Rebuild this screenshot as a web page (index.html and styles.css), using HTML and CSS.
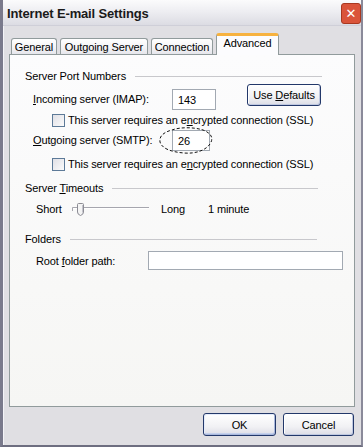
FILE: index.html
```html
<!DOCTYPE html>
<html>
<head>
<meta charset="utf-8">
<link rel="stylesheet" href="styles.css">
</head>
<body>
<div class="window">
  <div class="titlebar">
    <span class="title">Internet E-mail Settings</span>
    <span class="close"><span class="close-x">✕</span></span>
  </div>
  <div class="content">
    <div class="tabs">
      <div class="tab tab-general">General</div>
      <div class="tab tab-outgoing">Outgoing Server</div>
      <div class="tab tab-connection">Connection</div>
      <div class="tab tab-active">Advanced</div>
    </div>
    <div class="panel">
      <div class="group-head"><span>Server Port Numbers</span><span class="rule"></span></div>
      <div class="row row-incoming">
        <span class="label"><u>I</u>ncoming server (IMAP):</span>
        <span class="input input-port">143</span>
        <span class="btn btn-defaults"><span>Use <u>D</u>efaults</span></span>
      </div>
      <div class="check-row check-1"><span class="checkbox"></span><span>This server requires an e<u>n</u>crypted connection (SSL)</span></div>
      <div class="row row-outgoing">
        <span class="label"><u>O</u>utgoing server (SMTP):</span>
        <span class="input input-port input-short">26
          <svg class="circle" width="56" height="28" viewBox="0 0 56 28"><path d="M14 3 C22 0 36 0 45 3 C53 6 56 11 52 17 C48 23 38 27 26 26 C14 25 4 22 2 15 C1 9 6 5 14 3 Z" fill="none" stroke="#111" stroke-width="1" stroke-dasharray="3 2"/></svg>
        </span>
      </div>
      <div class="check-row check-2"><span class="checkbox"></span><span>This server requires an e<u>n</u>crypted connection (SSL)</span></div>

      <div class="group-head head-timeouts"><span>Server <u>T</u>imeouts</span><span class="rule"></span></div>
      <div class="slider-row">
        <span class="short">Short</span>
        <svg class="slider" width="78" height="14" viewBox="0 0 78 14">
          <line x1="0.5" y1="4.5" x2="77" y2="4.5" stroke="#a6a6ae"/>
          <line x1="1" y1="5.5" x2="77" y2="5.5" stroke="#ffffff"/>
          <line x1="0.5" y1="4.5" x2="0.5" y2="8" stroke="#a6a6ae"/>
          <path d="M5.5 1.5 Q5.5 0.5 6.5 0.5 L10.5 0.5 Q11.5 0.5 11.5 1.5 L11.5 9 Q11.5 11.5 8.5 12.5 Q5.5 11.5 5.5 9 Z" fill="#f4f4f4" stroke="#8c8c94"/>
          <line x1="10.5" y1="2" x2="10.5" y2="9.5" stroke="#c4c4cc"/>
        </svg>
        <span class="long">Long</span>
        <span>1 minute</span>
      </div>

      <div class="group-head head-folders"><span>Folders</span><span class="rule"></span></div>
      <div class="row row-root">
        <span class="label label-root">Root <u>f</u>older path:</span>
        <span class="input input-root"></span>
      </div>
    </div>
    <div class="buttons">
      <span class="btn btn-ok">OK</span>
      <span class="btn btn-cancel">Cancel</span>
    </div>
  </div>
</div>
</body>
</html>
```
FILE: styles.css
```css
html, body {
  margin: 0;
  padding: 0;
  background: #e0dfe3;
}
body {
  font-family: "Liberation Sans", Arial, sans-serif;
  font-size: 11px;
  letter-spacing: -0.12px;
  color: #000;
}
u { text-decoration: underline; text-underline-offset: 1px; }

.window {
  width: 363px;
  height: 447px;
  box-sizing: border-box;
  display: flex;
  flex-direction: column;
  background: #e0dfe3;
  border-left: 3px solid #7a7a8c;
  border-right: 2px solid #8a8a9a;
  border-bottom: 2px solid #6e6e80;
  box-shadow: inset 1px 0 0 #f4f4f8;
}

.titlebar {
  height: 26px;
  flex: none;
  display: flex;
  align-items: center;
  justify-content: space-between;
  padding: 0 0 0 4px;
  background: linear-gradient(#fbfbfc 0%, #eeeef2 45%, #dcdce3 100%);
  border-bottom: 1px solid #cfcfd8;
  box-sizing: border-box;
}
.title {
  font-weight: bold;
  font-size: 13px;
  letter-spacing: -0.15px;
  color: #1a1a1a;
  margin-top: 2px;
}
.close {
  flex: none;
  width: 20px;
  height: 21px;
  box-sizing: border-box;
  margin-top: 1px;
  border-radius: 3px;
  background-color: rgb(218, 84, 58);
  border: 1px solid rgb(168, 56, 32);
  display: flex;
  align-items: center;
  justify-content: center;
}
.close-x {
  color: #ffffff;
  font-family: "DejaVu Sans", sans-serif;
  font-size: 13px;
  font-weight: bold;
  line-height: 1;
}

.content {
  flex: 1;
  display: flex;
  flex-direction: column;
  padding: 7px 6px 0 6px;
}

.tabs {
  height: 22px;
  display: flex;
  align-items: flex-end;
  padding-left: 2px;
  gap: 3px;
  flex: none;
}
.tab {
  box-sizing: border-box;
  height: 16px;
  margin-bottom: 1px;
  border: 1px solid #919b9c;
  border-bottom: none;
  border-radius: 3px 3px 0 0;
  background: linear-gradient(#ffffff, #f3f3f6 60%, #e6e6ec);
  display: flex;
  align-items: center;
  justify-content: center;
  padding-top: 1px;
}
.tab-general { width: 46px; }
.tab-outgoing { width: 88px; }
.tab-connection { width: 62px; }
.tab-active {
  width: 63px;
  height: 22px;
  margin-bottom: 0;
  position: relative;
  z-index: 1;
  background: #fcfcfe;
  border-top: 3px solid #f7b23f;
  align-items: flex-start;
  padding-top: 1px;
}

.panel {
  height: 353px;
  box-sizing: border-box;
  margin-top: -1px;
  border: 1px solid #919b9c;
  background: linear-gradient(#fcfcfd, #f6f6f4);
  padding: 14px 0 0 15px;
  flex: none;
}

.group-head {
  height: 14px;
  width: 297px;
  display: flex;
  align-items: center;
  gap: 9px;
}
.rule {
  flex: 1;
  height: 1px;
  background: #c8c8cc;
}
.head-timeouts { margin-top: 9px; width: 293px; }
.head-folders { margin-top: 16px; width: 292px; }

.row {
  display: flex;
  align-items: center;
  height: 22px;
  padding-left: 8px;
}
.row-incoming { margin-top: 5px; }
.row-outgoing { margin-top: 1px; }
.label { width: 139px; flex: none; }

.input {
  box-sizing: border-box;
  height: 21px;
  border: 1px solid #a2a9b2;
  background: #fff;
  display: flex;
  align-items: center;
  padding-left: 5px;
  padding-top: 1px;
}
.input-port { width: 44px; }
.input-short { width: 38px; position: relative; }
.circle {
  position: absolute;
  left: -15px;
  top: -4px;
}

.btn {
  box-sizing: border-box;
  display: flex;
  align-items: center;
  justify-content: center;
  border: 1px solid #23386a;
  border-radius: 3px;
  background: linear-gradient(#ffffff, #f1f1f4 60%, #dcdde6);
  box-shadow: inset -1px -1px 0 #bfc8e0, inset 1px 1px 0 #fff;
}
.btn-defaults {
  width: 74px;
  height: 22px;
  margin-left: 31px;
  align-self: flex-start;
  margin-top: -4px;
}

.check-row {
  display: flex;
  align-items: center;
  height: 16px;
  padding-left: 27px;
  gap: 3px;
}
.check-1 { margin-top: 2px; }
.check-2 { margin-top: 5px; }
.checkbox {
  width: 13px;
  height: 13px;
  box-sizing: border-box;
  border: 1px solid #5d7a98;
  background: linear-gradient(135deg, #e0e0e6, #fbfbfb);
  flex: none;
}

.slider-row {
  display: flex;
  align-items: center;
  height: 14px;
  margin-top: 7px;
  padding-left: 11px;
}
.short { width: 36px; flex: none; }
.slider { flex: none; margin-top: 1px; }
.long { width: 47px; margin-left: 11px; flex: none; }

.row-root {
  height: 21px;
  margin-top: 4px;
  padding-left: 11px;
}
.label-root { width: 112px; }
.input-root { width: 195px; height: 19px; }

.buttons {
  display: flex;
  justify-content: flex-end;
  gap: 7px;
  margin-top: 6px;
  padding-right: 1px;
}
.btn-ok { width: 73px; height: 23px; box-shadow: inset -1px -1px 0 #a9b8dc, inset 1px 1px 0 #e4ebfa, inset 0 -2px 0 #c4d0ec; }
.btn-cancel { width: 71px; height: 23px; }
```
